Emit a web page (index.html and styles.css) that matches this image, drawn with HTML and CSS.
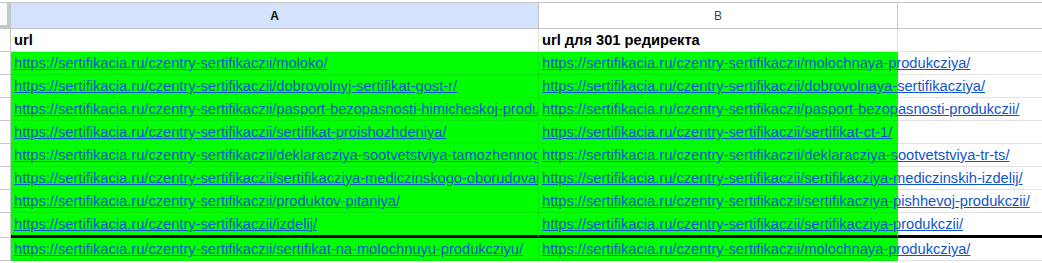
FILE: index.html
```html
<!DOCTYPE html>
<html lang="ru">
<head>
<meta charset="utf-8">
<title>Sheet</title>
<link rel="stylesheet" href="styles.css">
</head>
<body>
<div class="sheet">
  <div class="corner"></div>
  <div class="colhead sel">A</div>
  <div class="colhead">B</div>
  <div class="colhead last"></div>

  <div class="rowhead"></div>
  <div class="cell a bold">url</div>
  <div class="cell b bold">url для 301 редиректа</div>
  <div class="cell c"></div>

  <div class="rowhead"></div>
  <div class="cell a g"><a href="#">https://sertifikacia.ru/czentry-sertifikaczii/moloko/</a></div>
  <div class="cell b g"><a href="#">https://sertifikacia.ru/czentry-sertifikaczii/molochnaya-produkcziya/</a></div>
  <div class="cell c"></div>

  <div class="rowhead"></div>
  <div class="cell a g"><a href="#">https://sertifikacia.ru/czentry-sertifikaczii/dobrovolnyj-sertifikat-gost-r/</a></div>
  <div class="cell b g"><a href="#">https://sertifikacia.ru/czentry-sertifikaczii/dobrovolnaya-sertifikacziya/</a></div>
  <div class="cell c"></div>

  <div class="rowhead"></div>
  <div class="cell a g"><a href="#">https://sertifikacia.ru/czentry-sertifikaczii/pasport-bezopasnosti-himicheskoj-produkczii/</a></div>
  <div class="cell b g"><a href="#">https://sertifikacia.ru/czentry-sertifikaczii/pasport-bezopasnosti-produkczii/</a></div>
  <div class="cell c"></div>

  <div class="rowhead"></div>
  <div class="cell a g"><a href="#">https://sertifikacia.ru/czentry-sertifikaczii/sertifikat-proishozhdeniya/</a></div>
  <div class="cell b g"><a href="#">https://sertifikacia.ru/czentry-sertifikaczii/sertifikat-ct-1/</a></div>
  <div class="cell c"></div>

  <div class="rowhead"></div>
  <div class="cell a g"><a href="#">https://sertifikacia.ru/czentry-sertifikaczii/deklaracziya-sootvetstviya-tamozhennogo-soyuza/</a></div>
  <div class="cell b g"><a href="#">https://sertifikacia.ru/czentry-sertifikaczii/deklaracziya-sootvetstviya-tr-ts/</a></div>
  <div class="cell c"></div>

  <div class="rowhead"></div>
  <div class="cell a g"><a href="#">https://sertifikacia.ru/czentry-sertifikaczii/sertifikacziya-mediczinskogo-oborudovaniya/</a></div>
  <div class="cell b g"><a href="#">https://sertifikacia.ru/czentry-sertifikaczii/sertifikacziya-mediczinskih-izdelij/</a></div>
  <div class="cell c"></div>

  <div class="rowhead"></div>
  <div class="cell a g"><a href="#">https://sertifikacia.ru/czentry-sertifikaczii/produktov-pitaniya/</a></div>
  <div class="cell b g"><a href="#">https://sertifikacia.ru/czentry-sertifikaczii/sertifikacziya-pishhevoj-produkczii/</a></div>
  <div class="cell c"></div>

  <div class="rowhead"></div>
  <div class="cell a g thick"><a href="#">https://sertifikacia.ru/czentry-sertifikaczii/izdelij/</a></div>
  <div class="cell b g thick"><a href="#">https://sertifikacia.ru/czentry-sertifikaczii/sertifikacziya-produkczii/</a></div>
  <div class="cell c thick"></div>

  <div class="rowhead"></div>
  <div class="cell a g"><a href="#">https://sertifikacia.ru/czentry-sertifikaczii/sertifikat-na-molochnuyu-produkcziyu/</a></div>
  <div class="cell b g"><a href="#">https://sertifikacia.ru/czentry-sertifikaczii/molochnaya-produkcziya/</a></div>
  <div class="cell c"></div>
</div>
</body>
</html>
```

FILE: styles.css
```css
* { box-sizing: border-box; }
html, body { margin: 0; padding: 0; background: #fff; }
body {
  font-family: "Liberation Sans", Arial, sans-serif;
  font-size: 14.67px;
  color: #000;
}
.sheet {
  margin-top: 2px;
  border-top: 1px solid #c4c7c5;
  display: grid;
  grid-template-columns: 11px 528px 359px 1fr;
  grid-template-rows: 26px 23px 23px 23px 23px 23px 23px 23px 23px 25px 23px;
}
.corner {
  background: #f8f9fa;
  border-right: 4px solid #c4c7c5;
  border-bottom: 4px solid #c4c7c5;
}
.colhead {
  display: flex;
  align-items: center;
  justify-content: center;
  font-size: 12px;
  color: #444746;
  border-right: 1px solid #c4c7c5;
  border-bottom: 1px solid #c4c7c5;
  background: #fff;
}
.colhead.sel {
  background: #d3e3fd;
  color: #0b0b0b;
  font-weight: bold;
}
.colhead.last { border-right: none; }
.rowhead {
  background: #fff;
  border-right: 1px solid #c4c7c5;
  border-bottom: 1px solid #c4c7c5;
}
.cell {
  display: flex;
  align-items: flex-end;
  padding: 0 3px 2px 3px;
  line-height: 17px;
  white-space: nowrap;
  border-right: 1px solid #e1e1e1;
  border-bottom: 1px solid #e1e1e1;
}
.cell.a { overflow: hidden; }
.cell.b { overflow: visible; }
.cell.c { border-right: none; background: transparent; }
.cell.g {
  background: #00ff00;
  border-color: #0ae80a;
}
.cell.b.g { border-right-color: #00ff00; }
.bold { font-weight: bold; color: #000; }
.cell a {
  color: #1155cc;
  text-decoration: underline;
}
.cell.thick { border-bottom: 3px solid #000; }
```
